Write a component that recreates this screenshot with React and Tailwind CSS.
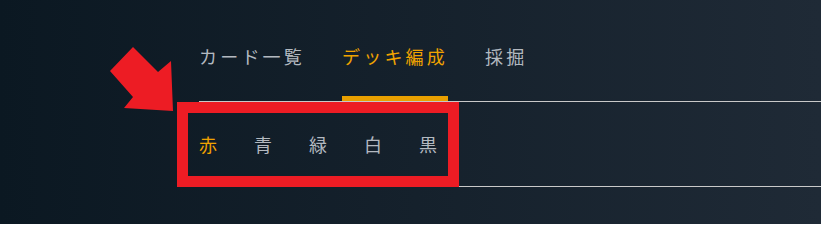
import React, { useState } from 'react';

const tabs = ['カード一覧', 'デッキ編成', '採掘'];
const colors = ['赤', '青', '緑', '白', '黒'];

const App = () => {
  const [activeTab, setActiveTab] = useState('デッキ編成');
  const [activeColor, setActiveColor] = useState('赤');

  return (
    <div
      className="relative h-[224px] w-full overflow-hidden bg-linear-to-r from-[#0b1822] to-[#1f2a36]"
      style={{ fontFamily: '"Noto Sans CJK JP", "Noto Sans", sans-serif' }}
    >
      <div className="pl-[200px] pt-[42px]">
        {/* Main tabs */}
        <nav className="-ml-px flex gap-[37px] border-b border-[#c9c9c9]">
          {tabs.map((tab) => (
            <button
              key={tab}
              onClick={() => setActiveTab(tab)}
              className={`border-b-[5px] pb-[26px] text-[18px] leading-[28px] tracking-[3.2px] ${
                activeTab === tab
                  ? 'border-[#e9a000] text-[#f0a300]'
                  : 'border-transparent text-[#b3b9c0]'
              }`}
            >
              {tab}
            </button>
          ))}
        </nav>

        {/* Color filter */}
        <div className="-ml-px flex h-[85px] items-center gap-[37px] border-b border-[#c9c9c9]">
          {colors.map((c) => (
            <button
              key={c}
              onClick={() => setActiveColor(c)}
              className={`text-[18px] leading-[28px] ${
                activeColor === c ? 'text-[#f0a300]' : 'text-[#b3b9c0]'
              }`}
            >
              {c}
            </button>
          ))}
        </div>
      </div>

      {/* Annotation: highlight box + arrow */}
      <div className="pointer-events-none absolute left-[177px] top-[102px] h-[85px] w-[282px] border-[11px] border-[#ed1c24]" />
      <svg className="pointer-events-none absolute left-0 top-0" width="821" height="224">
        <polygon
          points="133,47 158,72 171,61 173,111 124,108 133,97 110,71"
          fill="#ed1c24"
        />
      </svg>
    </div>
  );
};

export default App;
